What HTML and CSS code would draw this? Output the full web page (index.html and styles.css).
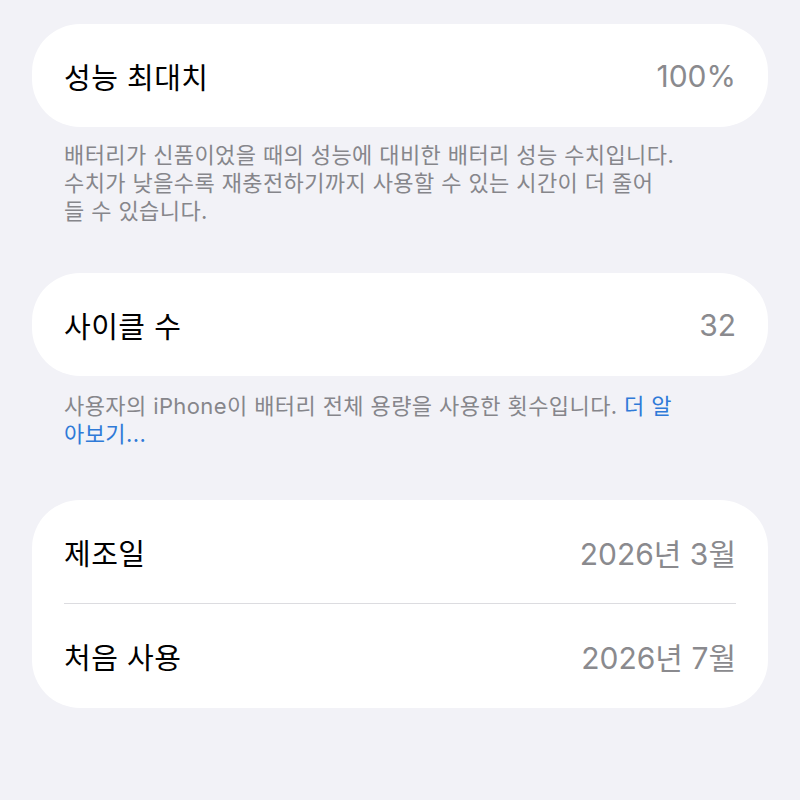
FILE: index.html
```html
<!DOCTYPE html>
<html lang="ko">
<head>
<meta charset="utf-8">
<link rel="stylesheet" href="styles.css">
</head>
<body>
<div class="page">
  <section class="section">
    <div class="card">
      <div class="row"><span class="label">성능 최대치</span><span class="value">100%</span></div>
    </div>
    <p class="footer">배터리가 신품이었을 때의 성능에 대비한 배터리 성능 수치입니다.<br>수치가 낮을수록 재충전하기까지 사용할 수 있는 시간이 더 줄어<br>들 수 있습니다.</p>
  </section>
  <section class="section">
    <div class="card">
      <div class="row"><span class="label">사이클 수</span><span class="value">32</span></div>
    </div>
    <p class="footer footer-b">사용자의 iPhone이 배터리 전체 용량을 사용한 횟수입니다. <span class="link">더 알<br>아보기...</span></p>
  </section>
  <section class="section">
    <div class="card">
      <div class="row"><span class="label">제조일</span><span class="value">2026년 3월</span></div>
      <div class="sep"></div>
      <div class="row row-last"><span class="label">처음 사용</span><span class="value">2026년 7월</span></div>
    </div>
  </section>
</div>
</body>
</html>
```
FILE: styles.css
```css
html, body {
  margin: 0;
  padding: 0;
  background: #f2f2f7;
}
body {
  font-family: Inter, "Noto Sans CJK KR", sans-serif;
  -webkit-font-smoothing: antialiased;
}
.page {
  padding: 24px 32px 0;
  display: flex;
  flex-direction: column;
}
.section {
  display: flex;
  flex-direction: column;
}
.card {
  background: #ffffff;
  border-radius: 48px;
  overflow: hidden;
}
.row {
  height: 103px;
  display: flex;
  align-items: center;
  justify-content: space-between;
  padding: 0 32px;
}
.row-last {
  height: 104px;
}
.label {
  font-family: "Noto Sans CJK KR", sans-serif;
  font-size: 29px;
  letter-spacing: 0.5px;
  color: #000000;
}
.value {
  font-size: 30px;
  color: #8a8a8e;
}
.sep {
  height: 1px;
  margin: 0 32px;
  background: #dcdce0;
}
.footer {
  margin: 14px 0 48px;
  padding: 0 32px;
  font-size: 22px;
  letter-spacing: 0.4px;
  line-height: 28px;
  color: #86868b;
}
.footer-b {
  margin-top: 16px;
  margin-bottom: 52px;
}
.link {
  color: #2f7ad8;
}
```
